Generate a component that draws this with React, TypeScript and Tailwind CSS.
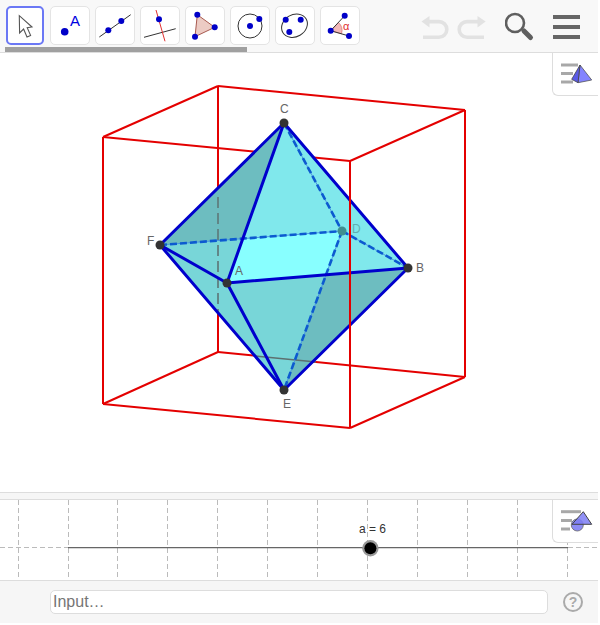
import React from "react";

const BLUE = "#0000c8";

function ToolBtn({ box, active, children }: { box: string; active?: boolean; children: React.ReactNode }) {
  return (
    <div
      className={
        active
          ? "w-[38px] h-[39px] mr-[1px] rounded-[5px] border-2 border-[#6b78f5] bg-white shrink-0"
          : "w-[40px] h-[39px] rounded-[5px] border border-[#e4e4e4] bg-white shrink-0"
      }
    >
      <svg viewBox={box} className={active ? "w-[34px] h-[35px] block" : "w-[38px] h-[37px] block"}>
        {children}
      </svg>
    </div>
  );
}

const Dot = ({ x, y, r = 3 }: { x: number; y: number; r?: number }) => <circle cx={x} cy={y} r={r} fill={BLUE} />;

const C = [284, 123], E = [284, 390], F = [160, 245], B = [408, 268], A = [227, 283], D = [342, 231];
const P = [243, 238.7], Q = [326, 274.8];
const pts = (...a: number[][]) => a.map((p) => p.join(",")).join(" ");
const RED = "#e40000";

function Edge({ a, b }: { a: number[]; b: number[] }) {
  return <line x1={a[0]} y1={a[1]} x2={b[0]} y2={b[1]} stroke="#0000cc" strokeWidth={3} strokeLinecap="round" />;
}
function Hidden({ a, b }: { a: number[]; b: number[] }) {
  return (
    <g>
      <line x1={a[0]} y1={a[1]} x2={b[0]} y2={b[1]} stroke="#4a96e0" strokeWidth={1} />
      <line x1={a[0]} y1={a[1]} x2={b[0]} y2={b[1]} stroke="#0c5ad0" strokeWidth={2.6} strokeDasharray="7 3" />
    </g>
  );
}
function Red({ a, b, w = 2 }: { a: number[]; b: number[]; w?: number }) {
  return <line x1={a[0]} y1={a[1]} x2={b[0]} y2={b[1]} stroke={RED} strokeWidth={w} />;
}
function Label({ x, y, t, c = "#666666" }: { x: number; y: number; t: string; c?: string }) {
  return (
    <text x={x} y={y} fontSize={12} fill={c} fontFamily="'Liberation Sans', sans-serif">
      {t}
    </text>
  );
}

function Scene() {
  const ftl = [103, 137], ftr = [350, 161], fbl = [103, 404], fbr = [350, 428];
  const btl = [218, 86], btr = [465, 110], bbr = [465, 377], bbl = [218, 352];
  return (
    <svg viewBox="0 53 598 439" className="w-full h-[439px] block">
      <Red a={btl} b={btr} />
      <Red a={btr} b={bbr} />
      <Red a={bbr} b={bbl} />
      <Red a={bbl} b={btl} />
      <Red a={ftl} b={ftr} />
      <Red a={ftl} b={fbl} />
      <Red a={fbl} b={fbr} />
      <Red a={ftl} b={btl} />
      <Red a={ftr} b={btr} />
      <Red a={fbl} b={bbl} />
      <Red a={fbr} b={bbr} />
      <polygon points={pts(F, C, B, E)} fill="#78d6d8" />
      <polygon points={pts(C, F, P)} fill="#6dbdc0" />
      <polygon points={pts(C, P, D, Q, B)} fill="#80e8ec" />
      <polygon points={pts(P, D, Q, A)} fill="#88ffff" />
      <polygon points={pts(Q, B, E)} fill="#6dbdc0" />
      <line x1={218} y1={197} x2={218} y2={313} stroke="#5f7f80" strokeWidth={1.8} strokeDasharray="11 5" />
      <line x1={255} y1={356} x2={316} y2={362} stroke="#5c7070" strokeWidth={1.6} />
      <Hidden a={C} b={D} />
      <Hidden a={F} b={D} />
      <Hidden a={D} b={B} />
      <Hidden a={D} b={E} />
      <Edge a={C} b={F} />
      <Edge a={C} b={B} />
      <Edge a={B} b={E} />
      <Edge a={E} b={F} />
      <Edge a={C} b={A} />
      <Edge a={A} b={F} />
      <Edge a={A} b={B} />
      <Edge a={A} b={E} />
      <Red a={ftr} b={fbr} w={2} />
      <circle cx={D[0]} cy={D[1]} r={4.5} fill="#3f8f90" />
      {[C, E, F, B, A].map((p, i) => (
        <circle key={i} cx={p[0]} cy={p[1]} r={4.5} fill="#333333" />
      ))}
      <Label x={280} y={113} t="C" />
      <Label x={147} y={245} t="F" />
      <Label x={235} y={275} t="A" />
      <Label x={416} y={272} t="B" />
      <Label x={352} y={233} t="D" c="#5fb0b2" />
      <Label x={283} y={408} t="E" />
    </svg>
  );
}

export default function App() {
  return (
    <div className="w-[598px] h-[623px] flex flex-col bg-white relative font-['Liberation_Sans',sans-serif]">
      <div className="h-[53px] shrink-0 bg-[#f8f8f8] border-b border-[#dddddd] flex flex-col">
        <div className="flex pl-[6px] pt-[6px] h-[47px] shrink-0">
          <div className="flex gap-[5px]">
            <ToolBtn box="8 8 34 35" active>
              <path d="M19.3 15.7 L19.6 33 L23.6 29 L27 37 L30.6 35.4 L27.2 27.8 L32 27 Z" fill="#ffffff" stroke="#555555" strokeWidth={1.1} />
            </ToolBtn>
            <ToolBtn box="51 7 38 37">
              <circle cx={64.7} cy={31.7} r={3.8} fill={BLUE} />
              <text x={70} y={26} fontSize={15} fill="#0000e0" fontFamily="'Liberation Sans', sans-serif">A</text>
            </ToolBtn>
            <ToolBtn box="96 7 38 37">
              <line x1={99.3} y1={37} x2={130.7} y2={14.7} stroke="#333" strokeWidth={1} />
              <Dot x={108.3} y={30.3} />
              <Dot x={121.3} y={21} />
            </ToolBtn>
            <ToolBtn box="141 7 38 37">
              <line x1={144} y1={37.3} x2={175.7} y2={28.7} stroke="#333" strokeWidth={1} />
              <line x1={156} y1={10} x2={165} y2={41.3} stroke="#e03030" strokeWidth={1} />
              <Dot x={159} y={19.3} />
            </ToolBtn>
            <ToolBtn box="186 7 38 37">
              <polygon points="197.3,14.7 214.7,27.3 195,36.7" fill="#eccbc4" stroke="#a85a50" strokeWidth={1} />
              <Dot x={197.3} y={14.7} />
              <Dot x={214.7} y={27.3} />
              <Dot x={195} y={36.7} />
            </ToolBtn>
            <ToolBtn box="231 7 38 37">
              <circle cx={250} cy={26} r={12} fill="none" stroke="#333" strokeWidth={1} />
              <Dot x={250} y={26} />
              <Dot x={259.3} y={19} />
            </ToolBtn>
            <ToolBtn box="276 7 38 37">
              <ellipse cx={294.5} cy={25.7} rx={13.5} ry={11} transform="rotate(-30 294.5 25.7)" fill="none" stroke="#333" strokeWidth={1} />
              <Dot x={285.7} y={19.7} />
              <Dot x={300.7} y={19.7} />
              <Dot x={289.3} y={32} />
            </ToolBtn>
            <ToolBtn box="321 7 38 37">
              <path d="M330.7 30.7 L338.5 22.5 A11 11 0 0 1 341.5 33.8 Z" fill="#f2b8b8" stroke="#d06060" strokeWidth={0.6} />
              <line x1={330.7} y1={30.7} x2={344.7} y2={15.7} stroke="#333" strokeWidth={1} />
              <line x1={330.7} y1={30.7} x2={349} y2={36} stroke="#333" strokeWidth={1} />
              <Dot x={330.7} y={30.7} />
              <Dot x={344.7} y={15.7} />
              <Dot x={349} y={36} />
              <text x={343} y={29.5} fontSize={11} fill="#e03030" fontFamily="'Liberation Sans', sans-serif">α</text>
            </ToolBtn>
          </div>
          <svg viewBox="415 8 80 40" className="w-[80px] h-[40px] ml-[55px] mt-[2px] block shrink-0">
            <path d="M429.5 16 L421.5 21.6 L429.5 27.4 Z" fill="#e2e2e2" />
            <path d="M428 21.6 H439 A7.8 7.8 0 0 1 439 37.2 H423" fill="none" stroke="#e2e2e2" strokeWidth={3.6} />
            <path d="M477.5 16 L485.7 21.6 L477.5 27.4 Z" fill="#e2e2e2" />
            <path d="M479 21.6 H467 A7.8 7.8 0 0 0 467 37.2 H484" fill="none" stroke="#e2e2e2" strokeWidth={3.6} />
          </svg>
          <svg viewBox="505 12 30 30" className="w-[30px] h-[30px] ml-[10px] mt-[6px] block shrink-0">
            <circle cx={515} cy={23} r={9} fill="none" stroke="#5f5f5f" strokeWidth={2.6} />
            <line x1={524} y1={31} x2={530.5} y2={37.5} stroke="#5f5f5f" strokeWidth={5} strokeLinecap="round" />
          </svg>
          <div className="flex flex-col gap-[6px] ml-[18px] mt-[9px]">
            <div className="w-[27px] h-[4px] bg-[#666666]" />
            <div className="w-[27px] h-[4px] bg-[#666666]" />
            <div className="w-[27px] h-[4px] bg-[#666666]" />
          </div>
        </div>
        <div className="w-[242px] h-[5px] ml-[5px] bg-[#a0a0a0]" />
      </div>

      <div className="relative h-[439px] shrink-0">
        <Scene />
        <div className="absolute right-0 top-0 w-[46px] h-[43px] bg-white border-l border-b border-[#dddddd] rounded-bl-[6px]">
          <svg viewBox="553 53 45 42" className="w-[45px] h-[42px] block">
            <line x1={561} y1={65} x2={578} y2={65} stroke="#a8a8a8" strokeWidth={3} />
            <line x1={561} y1={73.5} x2={573} y2={73.5} stroke="#a8a8a8" strokeWidth={3} />
            <line x1={561} y1={82} x2={573} y2={82} stroke="#a8a8a8" strokeWidth={3} />
            <polygon points="580,65 591.7,80 578,82.7" fill="#8484ff" stroke="#555" strokeWidth={0.8} />
            <polygon points="580,65 578,82.7 571.7,79.3" fill="#5a5ae6" stroke="#444" strokeWidth={0.8} />
          </svg>
        </div>
      </div>

      <div className="h-[8px] shrink-0 bg-[#f6f6f6] border-y border-[#dddddd]" />

      <div className="relative h-[80px] shrink-0">
        <svg viewBox="0 500 598 80" className="w-full h-[80px] block">
          {[18, 68, 117, 167, 217, 267, 317, 367, 417, 467, 517, 567].map((x) => (
            <line key={x} x1={x + 0.5} y1={500} x2={x + 0.5} y2={580} stroke="#bbbbbb" strokeWidth={1} strokeDasharray="5 3" />
          ))}
          <line x1={0} y1={547.5} x2={598} y2={547.5} stroke="#bbbbbb" strokeWidth={1} strokeDasharray="5 3" />
          <line x1={68} y1={547.6} x2={568} y2={547.6} stroke="#666666" strokeWidth={1.4} />
          <circle cx={370.4} cy={548.3} r={8.2} fill="#999999" />
          <circle cx={370.4} cy={548.3} r={6} fill="#000000" />
          <text x={359} y={533} fontSize={12} fill="#333333" fontFamily="'Liberation Sans', sans-serif">a = 6</text>
        </svg>
        <div className="absolute right-0 top-0 w-[46px] h-[43px] bg-white border-l border-b border-[#dddddd] rounded-bl-[6px]">
          <svg viewBox="553 500 45 42" className="w-[45px] h-[42px] block">
            <line x1={561} y1={511.7} x2={581} y2={511.7} stroke="#a8a8a8" strokeWidth={3} />
            <line x1={561} y1={520.5} x2={572} y2={520.5} stroke="#a8a8a8" strokeWidth={3} />
            <line x1={561} y1={529} x2={570} y2={529} stroke="#a8a8a8" strokeWidth={3} />
            <circle cx={577.3} cy={525} r={6} fill="#8c8cf5" stroke="#666" strokeWidth={0.8} />
            <polygon points="583.3,511.7 591.7,524.3 572,524.3" fill="#7c7cf5" fillOpacity={0.85} stroke="#444" strokeWidth={1} />
          </svg>
        </div>
      </div>

      <div className="h-[43px] shrink-0 bg-[#f6f6f6] border-t border-[#dddddd] flex items-center pl-[50px]">
        <div className="w-[498px] h-[24px] bg-white border border-[#dddddd] rounded-[5px] flex items-center pl-[2px] text-[16px] text-[#757575]">
          Input…
        </div>
        <div className="w-[20px] h-[20px] ml-[15px] rounded-full border-2 border-[#aaaaaa] flex items-center justify-center text-[14px] font-bold text-[#aaaaaa]">
          ?
        </div>
      </div>
    </div>
  );
}
